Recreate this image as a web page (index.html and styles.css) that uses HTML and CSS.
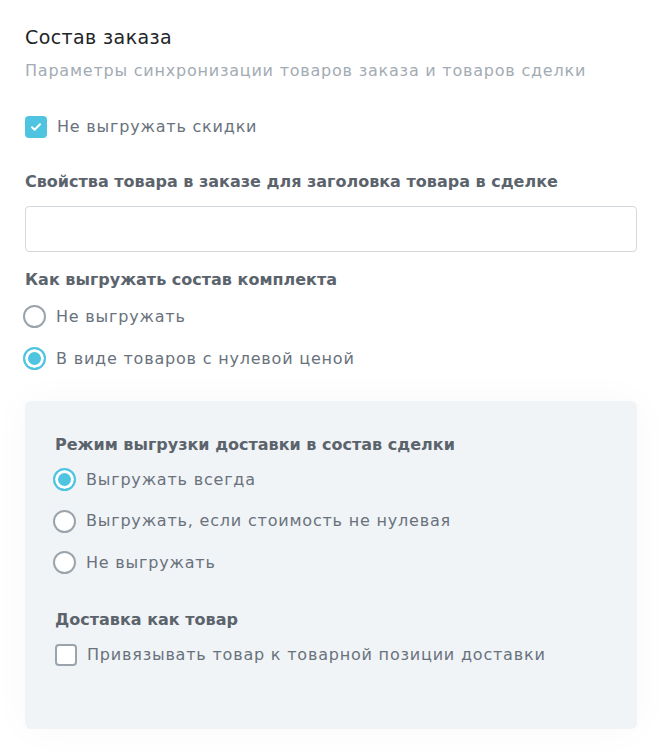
FILE: index.html
```html
<!DOCTYPE html>
<html lang="ru-RU">
	<head>
		<meta charset="UTF-8" />
		<title>Состав заказа</title>
		<link rel="stylesheet" href="styles.css">
	</head>
	<body>
		<section class="order-settings">
			<h2 class="order-settings__title">Состав заказа</h2>
			<p class="order-settings__hint">Параметры синхронизации товаров заказа и товаров сделки</p>

			<label class="check check_top">
				<span class="check__box check__box_on">
					<svg width="12" height="10" viewBox="0 0 12 10"><path d="M2 5.2l2.6 2.5L10 2.3" fill="none" stroke="#fff" stroke-width="2" stroke-linecap="round" stroke-linejoin="round"/></svg>
				</span>
				<span class="check__text">Не выгружать скидки</span>
			</label>

			<div class="field">
				<div class="field__label">Свойства товара в заказе для заголовка товара в сделке</div>
				<input class="field__input" type="text" />
			</div>

			<div class="group">
				<div class="field__label">Как выгружать состав комплекта</div>
				<label class="radio">
					<span class="radio__dot"></span>
					<span class="check__text">Не выгружать</span>
				</label>
				<label class="radio">
					<span class="radio__dot radio__dot_on"></span>
					<span class="check__text">В виде товаров с нулевой ценой</span>
				</label>
			</div>

			<div class="panel">
				<div class="group">
					<div class="field__label">Режим выгрузки доставки в состав сделки</div>
					<label class="radio">
						<span class="radio__dot radio__dot_on"></span>
						<span class="check__text">Выгружать всегда</span>
					</label>
					<label class="radio">
						<span class="radio__dot"></span>
						<span class="check__text">Выгружать, если стоимость не нулевая</span>
					</label>
					<label class="radio">
						<span class="radio__dot"></span>
						<span class="check__text">Не выгружать</span>
					</label>
				</div>
				<div class="group group_last">
					<div class="field__label">Доставка как товар</div>
					<label class="check">
						<span class="check__box"></span>
						<span class="check__text">Привязывать товар к товарной позиции доставки</span>
					</label>
				</div>
			</div>
		</section>
	</body>
</html>
```

FILE: styles.css
```css
html {
	box-sizing: border-box;
}

*,
*::after,
*::before {
	box-sizing: inherit;
}

body {
	margin: 0;
	background-color: #fff;
	font-family: "DejaVu Sans", "Open Sans", sans-serif;
	font-size: 16px;
	line-height: 1.4;
	-webkit-font-smoothing: antialiased;
}

.order-settings {
	padding: 23px 27px 28px 25px;
}

.order-settings__title {
	margin: 0;
	font-size: 19px;
	font-weight: 400;
	line-height: 28px;
	color: #222528;
	letter-spacing: 0.4px;
}

.order-settings__hint {
	margin: 9px 0 0;
	font-size: 16px;
	line-height: 22px;
	color: #a3abb4;
	letter-spacing: 0.78px;
}

.check {
	display: flex;
	align-items: center;
	gap: 10px;
}

.check_top {
	margin-top: 34px;
}

.check__box {
	display: flex;
	align-items: center;
	justify-content: center;
	flex-shrink: 0;
	width: 22px;
	height: 22px;
	border: 2px solid #9ba4ac;
	border-radius: 4px;
	background-color: #fff;
}

.check__box_on {
	border-color: #4fc4e1;
	background-color: #4fc4e1;
}

.check__text {
	font-size: 16px;
	line-height: 22px;
	color: #69727c;
	letter-spacing: 0.8px;
}

.field {
	margin-top: 33px;
}

.field__label {
	font-size: 16px;
	font-weight: 700;
	line-height: 22px;
	color: #5b636c;
}

.field__input {
	display: block;
	width: 100%;
	height: 46px;
	margin-top: 13px;
	border: 1px solid #d3d8dd;
	border-radius: 4px;
	background-color: #fff;
}

.group {
	margin-top: 17px;
	display: flex;
	flex-direction: column;
	gap: 19px;
}

.group > .field__label {
	margin-bottom: -5px;
}

.radio {
	display: flex;
	align-items: center;
	gap: 10px;
	margin-left: -2px;
}

.radio__dot {
	flex-shrink: 0;
	width: 23px;
	height: 23px;
	border: 2px solid #9ba4ac;
	border-radius: 50%;
	background-color: #fff;
}

.radio__dot_on {
	border-color: #4fc4e1;
	background-color: #4fc4e1;
	box-shadow: inset 0 0 0 3px #fff;
}

.panel {
	margin-top: 31px;
	padding: 33px 30px 63px;
	border-radius: 6px;
	background-color: #f1f4f7;
	box-shadow: 0 0 40px rgb(0 0 0 / 3%);
}

.panel .group {
	margin-top: 0;
	gap: 18.5px;
}

.panel .group > .field__label {
	margin-bottom: -6.5px;
}

.panel .group_last {
	margin-top: 35px;
	gap: 13px;
}

.panel .group_last > .field__label {
	margin-bottom: 0;
}
```
